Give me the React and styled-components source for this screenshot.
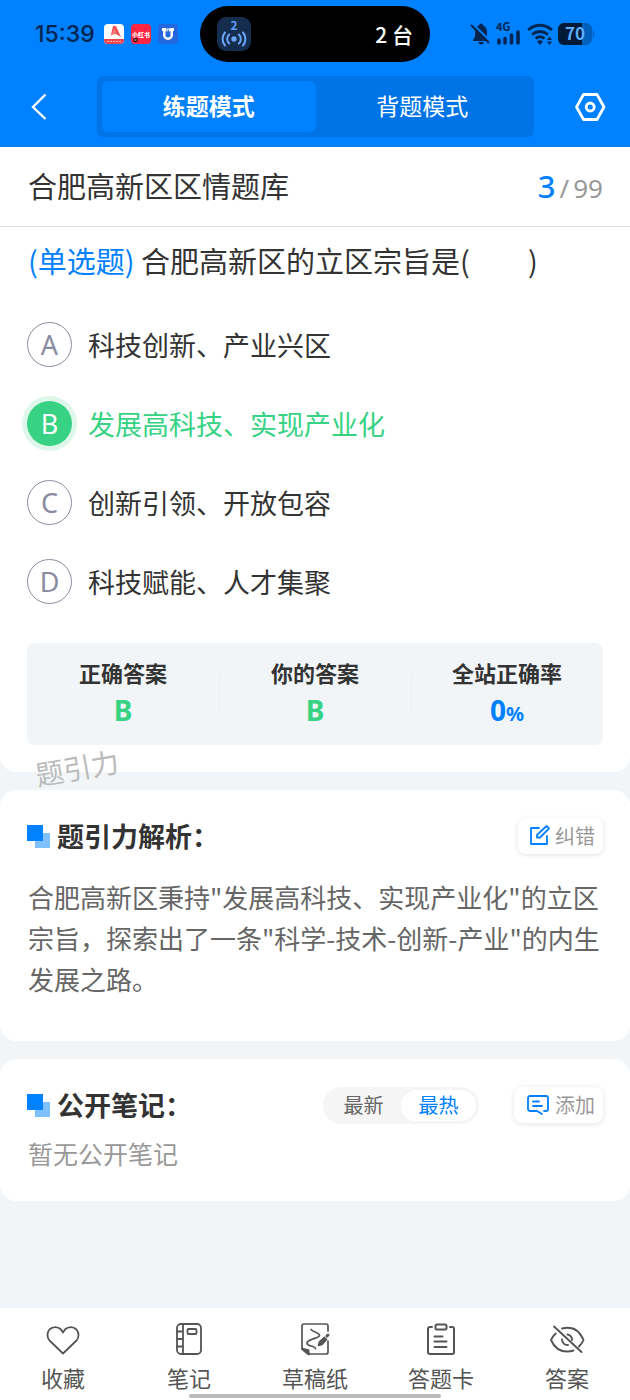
import React, { useState } from "react";
import styled, { createGlobalStyle } from "styled-components";

const GlobalStyle = createGlobalStyle`
  * {
    box-sizing: border-box;
  }
  body {
    margin: 0;
    background: #f1f5f8;
    color: #333333;
    font-family: "Noto Sans CJK SC", "Noto Sans", sans-serif;
  }
  button {
    padding: 0;
    border: 0;
    background: none;
    color: inherit;
    font: inherit;
    cursor: pointer;
  }
  h1, h2, p, ul, dl, dd {
    margin: 0;
    padding: 0;
    list-style: none;
  }
  svg {
    display: block;
    flex: none;
    overflow: visible;
  }
`;

const Page = styled.div`
  display: flex;
  flex-direction: column;
  min-height: 100vh;
`;

const Top = styled.header`
  background: #0081ff;
`;

const StatusBar = styled.div`
  display: grid;
  grid-template-columns: 1fr 230px 1fr;
  align-items: center;
  height: 68px;
  color: #03254f;
`;

const StatusGroup = styled.div`
  display: flex;
  align-items: center;
  gap: ${props => (props.$end ? "5px" : "7px")};
  justify-content: ${props => (props.$end ? "flex-end" : "flex-start")};
  padding: ${props => (props.$end ? "0 36px 0 0" : "0 0 0 35px")};
`;

const Clock = styled.time`
  margin-right: 2px;
  font-family: Inter, "Noto Sans", sans-serif;
  font-size: 23px;
  font-weight: 500;
  line-height: 28px;
`;

const Island = styled.div`
  display: flex;
  align-items: center;
  justify-content: space-between;
  height: 56px;
  padding: 0 17px;
  border-radius: 28px;
  background: #000000;
  color: #ffffff;
  font-size: 21px;
  font-weight: 500;
  line-height: 28px;
`;

const NavRow = styled.div`
  display: flex;
  align-items: center;
  height: 79px;
  padding: 0 24px 2px 28px;
  color: #ffffff;
`;

const Modes = styled.div`
  display: flex;
  flex: 1;
  margin: 0 40px 0 45px;
  padding: 5px;
  border-radius: 6px;
  background: #0074e6;
`;

const Mode = styled.button`
  flex: 1;
  height: 51px;
  padding-bottom: 4px;
  border-radius: 6px;
  background: ${props => (props.$active ? "#0081ff" : "transparent")};
  font-size: 23px;
  font-weight: ${props => (props.$active ? 700 : 400)};
`;

const Card = styled.section`
  padding: 0 27px;
  border-radius: ${props => (props.$first ? "0 0 16px 16px" : "16px")};
  background: #ffffff;
`;

const Content = styled.main`
  display: flex;
  flex: 1;
  flex-direction: column;
  gap: 18px;
`;

const BankBar = styled.div`
  display: flex;
  align-items: center;
  justify-content: space-between;
  height: 80px;
  margin: 0 -27px;
  padding: 0 27px 4px 28px;
  border-bottom: 1px solid #dddddd;
`;

const BankName = styled.h1`
  font-size: 29px;
  font-weight: 400;
`;

const Progress = styled.p`
  display: flex;
  align-items: baseline;
  gap: 4px;
  padding-top: 2px;
  color: #999999;
  font-family: "Noto Sans", sans-serif;
  font-size: 26px;
  & > b {
    color: #0081ff;
    font-size: 31px;
    font-weight: 500;
  }
`;

const Question = styled.p`
  padding: 12px 0 24px 1px;
  font-size: 29px;
  line-height: 42px;
  white-space: pre-wrap;
  & > span {
    color: #0081ff;
  }
`;

const Option = styled.button`
  display: flex;
  align-items: center;
  gap: 16px;
  width: 100%;
  height: 79px;
  color: ${props => (props.$right ? "#37d284" : "#333333")};
  font-size: 27px;
  text-align: left;
`;

const Letter = styled.span`
  display: flex;
  align-items: center;
  justify-content: center;
  width: 45px;
  height: 45px;
  border: ${props => (props.$right ? "0" : "1px solid #8a8d9f")};
  border-radius: 50%;
  background: ${props => (props.$right ? "#37d284" : "transparent")};
  box-shadow: ${props => (props.$right ? "0 0 0 5px #dff7ea" : "none")};
  color: ${props => (props.$right ? "#ffffff" : "#8a8d9f")};
  font-family: "Noto Sans", sans-serif;
`;

const Stats = styled.dl`
  display: grid;
  grid-template-columns: repeat(3, 1fr);
  margin: 22px 0 0;
  padding: 13px 0;
  border-radius: 8px;
  background: #f1f5f8;
`;

const Stat = styled.div`
  text-align: center;
  & + & {
    background: linear-gradient(#e9edf3, #e9edf3) left center / 1px 38px no-repeat;
  }
  & > dt {
    font-size: 22px;
    font-weight: 700;
    line-height: 32px;
  }
  & > dd {
    color: ${props => props.$color};
    font-family: "Noto Sans", sans-serif;
    font-size: 28px;
    font-weight: 700;
    line-height: 44px;
  }
  & small {
    font-size: 20px;
    line-height: 20px;
  }
`;

const Watermark = styled.div`
  position: relative;
  height: 27px;
  & > span {
    position: absolute;
    top: 2px;
    left: 8px;
    color: #bbbbbb;
    font-size: 28px;
    line-height: 40px;
    transform: rotate(-10deg);
  }
`;

const CardHead = styled.div`
  display: flex;
  align-items: center;
  height: 75px;
  padding: 28px 0 11px;
`;

const Title = styled.h2`
  display: flex;
  flex: 1;
  align-items: center;
  gap: 7px;
  font-size: 27px;
  font-weight: 700;
  line-height: 36px;
`;

const Chip = styled.button`
  display: flex;
  align-items: center;
  gap: 5px;
  height: 36px;
  padding: 0 8px 2px 12px;
  border-radius: 8px;
  box-shadow: 0 1px 5px rgba(0, 0, 0, 0.12);
  color: #999999;
  font-size: 20px;
`;

const Analysis = styled.p`
  padding: 11px 0 42px 1px;
  color: #666666;
  font-size: 26px;
  line-height: 41px;
`;

const Sort = styled.div`
  display: flex;
  margin-right: 35px;
  padding: 3px;
  border-radius: 19px;
  background: #f5f5f5;
`;

const SortButton = styled.button`
  width: 75px;
  height: 31px;
  border-radius: 16px;
  background: ${props => (props.$active ? "#ffffff" : "transparent")};
  color: ${props => (props.$active ? "#0081ff" : "#666666")};
  font-size: 20px;
  line-height: 30px;
`;

const Empty = styled.p`
  padding: 0 0 29px 1px;
  color: #999999;
  font-size: 25px;
  line-height: 38px;
`;

const BottomMenu = styled.nav`
  position: sticky;
  bottom: 0;
  display: grid;
  grid-template-columns: repeat(5, 1fr);
  height: 92px;
  background: #ffffff;
`;

const MenuButton = styled.button`
  display: flex;
  flex-direction: column;
  align-items: center;
  gap: 7px;
  padding-top: 13px;
  color: #555555;
  font-size: 22px;
  line-height: 30px;
`;

const HomeBar = styled.span`
  position: absolute;
  right: 30%;
  bottom: 2px;
  left: 30%;
  height: 4px;
  border-radius: 2px;
  background: #bbbbbb;
`;

const stroke = {
  fill: "none",
  stroke: "currentColor",
  strokeLinecap: "round",
  strokeLinejoin: "round",
};

const NewsIcon = () => (
  <svg width="20" height="20" viewBox="0 0 20 20">
    <rect width="20" height="20" rx="4" fill="#fff" />
    <path d="M0 15h20v1a4 4 0 0 1-4 4H4a4 4 0 0 1-4-4z" fill="#f04449" />
    <path d="M9 2h3l5 11-5-3q-4 0-9 4l4-3z" fill="#f0525a" />
    <path d="m11 4 1 5-5 2z" fill="#f77" />
    <path d="M3 17.5h14" stroke="#fbb" strokeWidth="1" strokeDasharray="2 1" />
  </svg>
);

const RedIcon = () => (
  <svg width="20" height="20" viewBox="0 0 20 20">
    <rect width="20" height="20" rx="4" fill="#ff2442" />
    <text x="10" y="13" textAnchor="middle" fontSize="6" fontWeight="900" fill="#fff">小红书</text>
    <circle cx="4.5" cy="16" r="2.3" fill="#300" />
    <path d="M3.5 16h2" stroke="#fff" />
  </svg>
);

const MagnetIcon = () => (
  <svg width="20" height="20" viewBox="0 0 20 20">
    <rect width="20" height="20" rx="4" fill="#2468df" />
    <path d="M4 4h4v3H7.5v4a2.500 2.500 0 0 0 5 0V7H12V4h4v3h-1v4a5 5 0 0 1-10 0V7H4z" fill="#fff" />
    <path d="M9 7.500V5h2.500v2.500" fill="none" stroke="#fff" strokeWidth="1.200" />
  </svg>
);

const HotspotIcon = () => (
  <svg width="34" height="34" viewBox="0 0 34 34">
    <rect width="34" height="34" rx="9" fill="#152e50" />
    <text x="17" y="13" textAnchor="middle" fontSize="12" fontWeight="700" fill="#5c9cf5">2</text>
    <g fill="none" stroke="#6ba5f8" strokeWidth="2" strokeLinecap="round">
      <circle cx="17" cy="22" r="2.700" fill="#6ba5f8" stroke="none" />
      <path d="M12.200 17.500a6 6 0 0 0 0 9M21.800 17.500a6 6 0 0 1 0 9M8 15.500a10 10 0 0 0 0 13M26 15.500a10 10 0 0 1 0 13" />
    </g>
  </svg>
);

const MuteIcon = () => (
  <svg width="20" height="22" viewBox="0 0 20 22">
    <path d="M6 3.500 8 2.500Q8 .5 10 .5T12 2.500Q16 4 16 9v5l2 3v1H2v-1l2-3V9Q4 5 6 3.500M7 19h6q-1 2.500-3 2.500T7 19" fill="currentColor" />
    <path d="M2 1 20 19" stroke="#0081ff" strokeWidth="2" />
    <path d="M0 2 18 20" stroke="currentColor" strokeWidth="2" />
  </svg>
);

const SignalIcon = () => (
  <svg width="26" height="22" viewBox="0 0 26 22">
    <text x="0" y="8" fontSize="11" fontWeight="700" fill="currentColor">4G</text>
    <path d="M3 20v-3M9 20v-4.500M15.500 20V12M22 20V9" stroke="currentColor" strokeWidth="3.600" strokeLinecap="round" />
  </svg>
);

const WifiIcon = () => (
  <svg width="26" height="22" viewBox="0 0 26 22">
    <g fill="none" stroke="currentColor" strokeWidth="2.800">
      <path d="M1 7q12-9.500 24 0M5 11.500q8-6 16 0M8.500 15.500q4.500-3.500 9 0" />
    </g>
    <path d="M10 18.500q3-2.500 6 0L13 22zM20 17l2.500-3.500L25 17zM20 18.500l2.500 3.500 2.500-3.500z" fill="currentColor" />
  </svg>
);

const BatteryIcon = () => (
  <svg width="36" height="22" viewBox="0 0 36 22">
    <path d="M5 0h23a6 6 0 0 1 6 6v10a6 6 0 0 1-6 6H5z" fill="#0260bc" />
    <path d="M34.800 6q3 5 0 10z" fill="#0260bc" />
    <path d="M6 0h18v22H6a6 6 0 0 1-6-6V6a6 6 0 0 1 6-6" fill="#021a36" />
    <text x="17" y="17" textAnchor="middle" fontSize="17" fontWeight="700" fill="#5baeff">70</text>
  </svg>
);

const BackIcon = () => (
  <svg width="24" height="28" viewBox="0 0 24 28" fill="none" stroke="currentColor" strokeWidth="2.400">
    <path d="M17.500 1.500 5 14 17.500 26" />
  </svg>
);

const SettingsIcon = () => (
  <svg width="32" height="30" viewBox="0 0 32 30" {...stroke} strokeWidth="2.800">
    <path d="M9.500 2.500h13.500L30 15l-7 12.500H9.500L2.500 15z" />
    <circle cx="16.200" cy="15" r="4" />
  </svg>
);

const SquaresIcon = () => (
  <svg width="23" height="23" viewBox="0 0 23 23">
    <path d="M8 8h15v15H8z" fill="#7fc0ff" />
    <path d="M0 0h16v16H0z" fill="#0081ff" />
  </svg>
);

const EditIcon = () => (
  <svg width="20" height="22" viewBox="0 0 20 22" {...stroke} color="#0081ff" strokeWidth="1.800">
    <path d="M9 4H1v16h16v-8" />
    <path d="m16.500 2 2.500 2.500-9 9H7V11z" />
  </svg>
);

const CommentIcon = () => (
  <svg width="24" height="20" viewBox="0 0 24 20" {...stroke} color="#0081ff" strokeWidth="1.800">
    <path d="M10.500 17H4a2 2 0 0 1-2-2V4a2 2 0 0 1 2-2h16a2 2 0 0 1 2 2v11a2 2 0 0 1-2 2h-2M11 17l5 3" />
    <path d="M7 7.500h6M7 12h9" />
  </svg>
);

const HeartIcon = () => (
  <svg width="34" height="34" viewBox="0 0 34 34" {...stroke} strokeWidth="1.800">
    <path d="M17 32.500 3.500 19.500A8.500 8.500 0 0 1 3.500 8.500 8 8 0 0 1 15 8.500L17 11.500 19 8.500a8 8 0 0 1 11.500 0 8.500 8.500 0 0 1 0 11z" />
  </svg>
);

const NotebookIcon = () => (
  <svg width="34" height="34" viewBox="0 0 34 34" {...stroke} strokeWidth="1.800">
    <rect x="5" y="3" width="24" height="30" rx="4" />
    <path d="M11 3v30M5 10.500h6M5 18h6M5 25.500h6" />
    <rect x="15.500" y="8" width="9" height="5" rx="1" />
  </svg>
);

const DraftIcon = () => (
  <svg width="34" height="34" viewBox="0 0 34 34" {...stroke} strokeWidth="1.700">
    <path d="M30 10V5a2 2 0 0 0-2-2H6a2 2 0 0 0-2 2v23l6 5h18a2 2 0 0 0 2-2V20" />
    <path d="M4 27.500 10.500 29l.5 4.500z" fill="currentColor" />
    <path d="M13 8.500c3 3 8.500 3 8.500 6S9 18 9 22s7 2 8.500 5.500" />
    <path d="m20.500 24.500 1-3.500 5-4.500 2 2-4.500 5z" fill="currentColor" />
    <path d="m29 15 1-1" strokeWidth="3" />
  </svg>
);

const SheetIcon = () => (
  <svg width="34" height="34" viewBox="0 0 34 34" {...stroke} strokeWidth="2">
    <path d="M8 6H6a2 2 0 0 0-2 2v23a2 2 0 0 0 2 2h22a2 2 0 0 0 2-2V8a2 2 0 0 0-2-2h-2" />
    <rect x="11.500" y="3.500" width="11" height="5" rx="1.500" />
    <path d="M10.500 15.500h8M10.500 20.500h12M10.500 26h12" />
  </svg>
);

const EyeOffIcon = () => (
  <svg width="34" height="34" viewBox="0 0 34 34" {...stroke} strokeWidth="1.900">
    <path d="M5.700 12.500Q2 16 1 19 6 30.500 17 30.500q3.500 0 6.500-1M12 7.500q15-4 21.500 11.500-1.500 3.500-4.500 6.500" />
    <path d="M12 18.500a5.500 5.500 0 0 0 6 5.500M17.500 13.500a5 5 0 0 1 4.500 5.500" />
    <path d="M4 5.500 31.500 31" />
  </svg>
);

const options = [
  ["A", "科技创新、产业兴区"],
  ["B", "发展高科技、实现产业化"],
  ["C", "创新引领、开放包容"],
  ["D", "科技赋能、人才集聚"],
];

const menu = [
  ["收藏", HeartIcon],
  ["笔记", NotebookIcon],
  ["草稿纸", DraftIcon],
  ["答题卡", SheetIcon],
  ["答案", EyeOffIcon],
];

const App = () => {
  const [mode, setMode] = useState("练题模式");
  const [sort, setSort] = useState("最热");

  return (
    <Page>
      <GlobalStyle />
      <Top>
        <StatusBar>
          <StatusGroup>
            <Clock>15:39</Clock>
            <NewsIcon />
            <RedIcon />
            <MagnetIcon />
          </StatusGroup>
          <Island>
            <HotspotIcon />
            <span>2 台</span>
          </Island>
          <StatusGroup $end>
            <MuteIcon />
            <SignalIcon />
            <WifiIcon />
            <BatteryIcon />
          </StatusGroup>
        </StatusBar>
        <NavRow>
          <button aria-label="返回"><BackIcon /></button>
          <Modes>
            {["练题模式", "背题模式"].map(name => (
              <Mode key={name} $active={mode === name} onClick={() => setMode(name)}>
                {name}
              </Mode>
            ))}
          </Modes>
          <button aria-label="设置"><SettingsIcon /></button>
        </NavRow>
      </Top>
      <Content>
        <Card $first>
          <BankBar>
            <BankName>合肥高新区区情题库</BankName>
            <Progress>
              <b>3</b>
              <span>/</span>
              <span>99</span>
            </Progress>
          </BankBar>
          <Question><span>(单选题)</span> 合肥高新区的立区宗旨是(　　)</Question>
          <ul>
            {options.map(([letter, text]) => (
              <li key={letter}>
                <Option $right={letter === "B"}>
                  <Letter $right={letter === "B"}>{letter}</Letter>
                  {text}
                </Option>
              </li>
            ))}
          </ul>
          <Stats>
            <Stat $color="#37d284"><dt>正确答案</dt><dd>B</dd></Stat>
            <Stat $color="#37d284"><dt>你的答案</dt><dd>B</dd></Stat>
            <Stat $color="#0081ff"><dt>全站正确率</dt><dd>0<small>%</small></dd></Stat>
          </Stats>
          <Watermark><span>题引力</span></Watermark>
        </Card>
        <Card>
          <CardHead>
            <Title><SquaresIcon />题引力解析：</Title>
            <Chip><EditIcon />纠错</Chip>
          </CardHead>
          <Analysis>
            合肥高新区秉持"发展高科技、实现产业化"的立区宗旨，探索出了一条"科学-技术-创新-产业"的内生发展之路。
          </Analysis>
        </Card>
        <Card>
          <CardHead>
            <Title><SquaresIcon />公开笔记：</Title>
            <Sort>
              {["最新", "最热"].map(name => (
                <SortButton key={name} $active={sort === name} onClick={() => setSort(name)}>
                  {name}
                </SortButton>
              ))}
            </Sort>
            <Chip><CommentIcon />添加</Chip>
          </CardHead>
          <Empty>暂无公开笔记</Empty>
        </Card>
      </Content>
      <BottomMenu>
        {menu.map(([label, Icon]) => (
          <MenuButton key={label}>
            <Icon />
            {label}
          </MenuButton>
        ))}
        <HomeBar />
      </BottomMenu>
    </Page>
  );
};

export default App;
